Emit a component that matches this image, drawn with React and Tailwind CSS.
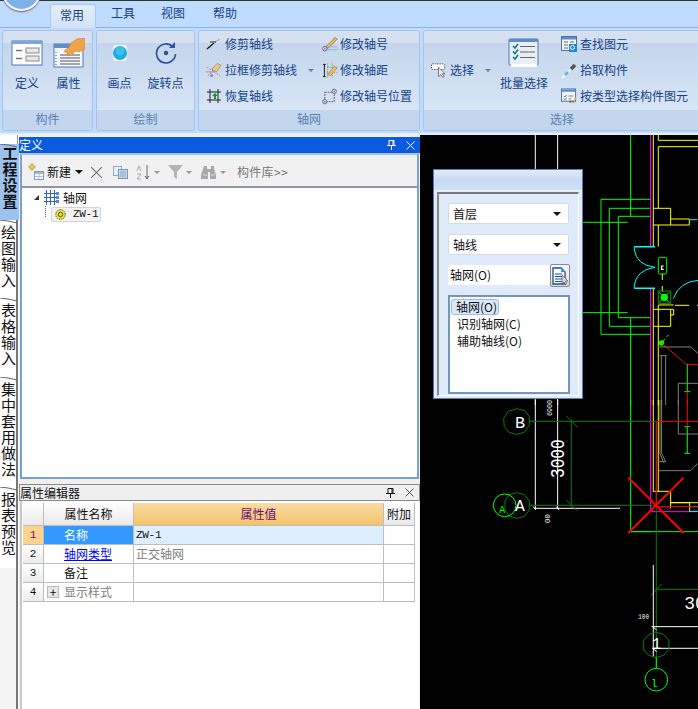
import React from "react";

const FONT = '"Noto Sans CJK SC","Liberation Sans",sans-serif';

function Group({ label, className, children }) {
  return (
    <div className={`flex flex-col rounded-[3px] border border-[#a8c3e4] overflow-hidden shrink-0 ${className}`}>
      <div className="h-[79px] flex bg-gradient-to-b from-[#c5d6ec] to-[#d7e5f5] border-t-[12px] border-t-[#d5e1f1] box-border">
        <div className="flex flex-1 -mt-[12px]">{children}</div>
      </div>
      <div className="h-[20px] bg-[#c2d6ee] text-[12px] leading-[18px] text-center text-[#5a7fb5]">{label}</div>
    </div>
  );
}

function BigBtn({ icon, label, w = "w-[45px]", labelTop = "mt-[6px]" }) {
  return (
    <div className={`flex flex-col items-center pt-[6px] ${w}`}>
      <div className="h-[32px] flex items-center justify-center">{icon}</div>
      <div className={`${labelTop} text-[12px] leading-[16px] text-[#15428b] whitespace-nowrap`}>{label}</div>
    </div>
  );
}

function SmallBtn({ icon, label, caret, gap = "gap-[3px]" }) {
  return (
    <div className={`h-[26px] flex items-center ${gap} whitespace-nowrap`}>
      <span className="w-[16px] h-[16px] flex items-center justify-center shrink-0">{icon}</span>
      <span className="text-[12px] text-[#15428b]">{label}</span>
      {caret && <span className="ml-[8px] w-0 h-0 border-x-[3px] border-x-transparent border-t-[3px] border-t-[#5f7ea9]" />}
    </div>
  );
}

const I = {
  def: (
    <svg width="32" height="26" viewBox="0 0 32 26">
      <rect x="1" y="1" width="30" height="24" fill="#fff" stroke="#4d7cc0" />
      <rect x="1" y="1" width="30" height="3" fill="#7fa5d8" />
      <rect x="15" y="8" width="13" height="5" fill="#e8e8e8" stroke="#8a8a8a" />
      <rect x="15" y="16" width="13" height="5" fill="#e8e8e8" stroke="#8a8a8a" />
      <path d="M5 10.5h6M5 18.5h6" stroke="#777" strokeWidth="1.5" />
    </svg>
  ),
  prop: (
    <svg width="32" height="30" viewBox="0 0 32 30">
      <rect x="1" y="6" width="29" height="23" fill="#f4f7fb" stroke="#4d7cc0" />
      <rect x="1" y="6" width="29" height="4" fill="#5f8dcb" />
      <path d="M7 17h20M7 20h20M7 23h20M7 26h20" stroke="#555" />
      <path d="M3 14v1M3 17v1M3 20v1M3 23v1M3 26v1" stroke="#2a50a8" />
      <path d="M11 13l5-4 2-4 6-4 8-1v11l-6 3-4-1-2 3-3-1-1 3-2-1 1-3-2 1z" fill="#f0a44a" stroke="#c97a24" strokeWidth=".5" />
    </svg>
  ),
  dot: (
    <svg width="18" height="18" viewBox="0 0 18 18">
      <rect x="2" y="1" width="14" height="16" rx="4" fill="#fff" />
      <circle cx="9" cy="9" r="7" fill="#1cabe6" />
      <circle cx="9" cy="7" r="4.5" fill="#3cc0f0" />
    </svg>
  ),
  rot: (
    <svg width="24" height="24" viewBox="0 0 24 24" fill="none">
      <path d="M19 6A9.5 9.5 0 1 0 21.5 13" stroke="#2a50a8" strokeWidth="1.7" />
      <path d="M15 7h6V1z" fill="#2a50a8" />
      <circle cx="12" cy="12" r="2.2" fill="#2a50a8" />
    </svg>
  ),
  trim: (
    <svg width="16" height="12" viewBox="0 0 16 12" fill="none">
      <path d="M1 11L8 5" stroke="#111" strokeWidth="1.3" />
      <path d="M9 4l5-3" stroke="#777" strokeDasharray="2 1" />
      <path d="M4 4h6" stroke="#333" />
    </svg>
  ),
  boxTrim: (
    <svg width="17" height="17" viewBox="0 0 17 17" fill="none">
      <path d="M1 5l14 9M2 14l6-5" stroke="#c66ac2" strokeDasharray="2 1" />
      <path d="M0 10h9" stroke="#999" />
      <path d="M6 7l6-6 4 2-5 7z" fill="#e8c98a" stroke="#9a7a45" strokeWidth=".7" />
      <circle cx="6" cy="14" r="1.5" fill="#8a7ac0" />
    </svg>
  ),
  restore: (
    <svg width="14" height="14" viewBox="0 0 14 14" fill="none">
      <path d="M3 0v14M11 0v14M0 3h14M0 11h14" stroke="#222" />
      <path d="M8 4l3 3H9v3H7V7H5z" fill="#0b9a2e" />
    </svg>
  ),
  editNo: (
    <svg width="17" height="16" viewBox="0 0 17 16" fill="none">
      <path d="M5 10L14 1l2 2-9 9-3 1z" fill="#eebd55" stroke="#6f5b2a" strokeWidth=".7" />
      <circle cx="3" cy="13" r="2.4" fill="#dfe6f6" stroke="#4a66b8" />
      <path d="M6 14h10M6 11h10" stroke="#9ab1d4" />
      <path d="M3 12v2" stroke="#c22" />
    </svg>
  ),
  editDist: (
    <svg width="17" height="15" viewBox="0 0 17 15" fill="none">
      <path d="M1 1h3M1 14h3M2.5 1v13" stroke="#111" />
      <path d="M6 0v15M11 0v15M5 4h12M5 10h12" stroke="#888" strokeDasharray="1 1" />
      <path d="M6 12L13 3l3 2-7 8z" fill="#efc455" stroke="#8f7433" strokeWidth=".6" />
    </svg>
  ),
  editPos: (
    <svg width="17" height="17" viewBox="0 0 17 17" fill="none">
      <rect x="3" y="4" width="10" height="10" stroke="#555" strokeDasharray="2 1" />
      <circle cx="3" cy="14" r="2.3" fill="#dfe6f6" stroke="#4a66b8" />
      <circle cx="13" cy="3" r="2.3" fill="#dfe6f6" stroke="#4a66b8" />
      <path d="M3 13v2M13 2v2" stroke="#c22" />
    </svg>
  ),
  select: (
    <svg width="17" height="16" viewBox="0 0 17 16" fill="none">
      <rect x="0.5" y="1.5" width="14" height="6" rx="1" fill="#fff" stroke="#555" strokeDasharray="1.5 1" />
      <path d="M8 5v10l2.5-2 2 3 1.5-1-2-3h3z" fill="#eef" stroke="#555" strokeWidth=".8" />
    </svg>
  ),
  batch: (
    <svg width="32" height="30" viewBox="0 0 32 30">
      <rect x="1" y="1" width="29" height="26" rx="1" fill="#e9eef5" stroke="#4d7cc0" />
      <rect x="1" y="1" width="29" height="3" fill="#5f8dcb" />
      <rect x="3" y="26" width="26" height="3" fill="#fff" />
      <path d="M12 8.5h15M12 14h15M12 19.5h15" stroke="#666" strokeWidth="1.2" />
      <path d="M5 8l2 2 3-4M5 13.5l2 2 3-4M5 19l2 2 3-4" stroke="#0d7c88" strokeWidth="1.6" fill="none" />
    </svg>
  ),
  find: (
    <svg width="16" height="16" viewBox="0 0 16 16" fill="none">
      <rect x="0.5" y="0.5" width="15" height="14" fill="#f2f5fa" stroke="#4d6fa3" />
      <rect x="1" y="1" width="14" height="2.5" fill="#5f8dcb" />
      <path d="M3 6h4M9 6h4M3 9h4M3 12h4" stroke="#666" />
      <rect x="8" y="8" width="8" height="8" fill="#1e86d8" />
      <circle cx="11.5" cy="11.5" r="2" stroke="#fff" />
    </svg>
  ),
  pick: (
    <svg width="16" height="17" viewBox="0 0 16 17" fill="none">
      <path d="M1 16l3-3" stroke="#f4fbff" strokeWidth="2" />
      <path d="M4 13l3-3" stroke="#5bb4ea" strokeWidth="2.5" />
      <path d="M7 10l3-3" stroke="#e4e8ee" strokeWidth="3" />
      <path d="M10 7l4-4" stroke="#555" strokeWidth="3.5" />
    </svg>
  ),
  byType: (
    <svg width="17" height="16" viewBox="0 0 17 16" fill="none">
      <rect x="0.5" y="0.5" width="15" height="13" fill="#f2f5fa" stroke="#4d6fa3" />
      <rect x="1" y="1" width="14" height="2.5" fill="#5f8dcb" />
      <path d="M3 8l1 1 2-2M3 11l1 1 2-2" stroke="#3a6aa8" />
      <path d="M8 8h5M8 11h3" stroke="#777" />
      <rect x="9" y="13" width="2" height="2" fill="#c33" />
      <rect x="12" y="13" width="2" height="2" fill="#3a3" />
      <rect x="14" y="10" width="2" height="2" fill="#db3" />
    </svg>
  ),
  newB: (
    <svg width="17" height="18" viewBox="0 0 17 18" fill="none">
      <path d="M3 1h2v2h2v2H5v2H3V5H1V3h2z" fill="#f5d36a" stroke="#b8963a" strokeWidth=".7" />
      <rect x="6.5" y="8.5" width="9" height="8" fill="#fff" stroke="#7d9ac2" />
      <rect x="7" y="9" width="8" height="2" fill="#9cb9de" />
      <path d="M11 11v5M7 13.5h8" stroke="#aebfd6" />
    </svg>
  ),
  x: (
    <svg width="11" height="11" viewBox="0 0 11 11" fill="none">
      <path d="M0 0l11 11M11 0L0 11" stroke="#777" strokeWidth="1.2" />
    </svg>
  ),
  copy: (
    <svg width="15" height="13" viewBox="0 0 15 13" fill="none">
      <rect x="0.5" y="0.5" width="8" height="9" fill="#e7eef8" stroke="#8fa9cc" />
      <rect x="5.5" y="3.5" width="9" height="9" fill="#c6d7ee" stroke="#7d97bb" />
      <path d="M7 6h6M7 8h6M7 10h6" stroke="#8fa6c6" />
    </svg>
  ),
  sort: (
    <svg width="14" height="15" viewBox="0 0 14 15" fill="none">
      <path d="M1 6l2-5 2 5M1 9h4l-4 5h4" stroke="#aaa" />
      <path d="M11 0v13" stroke="#666" />
      <path d="M9 11l2 3 2-3" stroke="#666" />
    </svg>
  ),
  filter: (
    <svg width="15" height="14" viewBox="0 0 15 14">
      <path d="M0 0h15L9 7v7l-3-2V7z" fill="#b4b4b4" />
    </svg>
  ),
  binoc: (
    <svg width="16" height="13" viewBox="0 0 16 13">
      <path d="M3 0h3v3h4V0h3v3l2 6v4H9V6H7v7H0V9l2-6z" fill="#a9a9a9" />
      <path d="M2 9h4M10 9h4" stroke="#dadada" />
    </svg>
  ),
  axis: (
    <svg width="15" height="15" viewBox="0 0 15 15" fill="none">
      <path d="M0 3.5h13M0 7.5h13M0 11.5h13M2.5 0v15M6.5 0v15M10.5 0v15" stroke="#2f62bd" />
      <path d="M12 2h3v3h-3zM12 6h3v3h-3zM12 10h3v3h-3z" fill="#5c86cf" />
    </svg>
  ),
  gear: (
    <svg width="11" height="11" viewBox="0 0 11 11">
      <circle cx="5.5" cy="5.5" r="4.8" fill="#f3e321" stroke="#333" strokeDasharray="1 1" />
      <circle cx="5.5" cy="5.5" r="2.2" fill="#f3e321" stroke="#3a4e82" />
    </svg>
  ),
  pin: (
    <svg width="9" height="10" viewBox="0 0 9 10" fill="none">
      <path d="M2 .5h5v5H2zM6 1v4M0 5.5h9M4.5 6v4" stroke="currentColor" />
    </svg>
  ),
  close: (
    <svg width="9" height="9" viewBox="0 0 9 9" fill="none">
      <path d="M.5.5l8 8M8.5.5l-8 8" stroke="currentColor" />
    </svg>
  ),
  caret: <span className="w-0 h-0 border-x-[4px] border-x-transparent border-t-[4px] border-t-[#111]" />,
  smallCaret: <span className="w-0 h-0 border-x-[3px] border-x-transparent border-t-[3px] border-t-[#999]" />,
  docCursor: (
    <svg width="16" height="18" viewBox="0 0 16 18" fill="none">
      <path d="M1 1h8l4 4v12H1z" fill="#fff" stroke="#1a4fa0" strokeWidth="1.3" />
      <path d="M3 7h7M3 9.5h7M3 12h7M3 14.5h7" stroke="#1a4fa0" strokeWidth="1.2" />
      <path d="M9 1v4h4z" fill="#3aa0e8" />
      <path d="M10 8v9l2-2 1.5 2.5 1.3-.7-1.3-2.5 2.5-.3z" fill="#d9d9d9" stroke="#555" strokeWidth=".7" />
    </svg>
  ),
};

function Ribbon() {
  return (
    <div className="h-[135px] shrink-0 bg-[#bfdbff] relative overflow-hidden">
      <div className="absolute left-0 right-0 top-0 h-[1px] bg-[#2a3a2a]" />
      <div className="absolute left-[2px] -top-[28px] w-[39px] h-[39px] rounded-full bg-[#7fb0e8] border-[2px] border-[#f2f6fb] shadow-[0_1px_2px_#667]" />
      <div className="h-[27px] flex items-end pl-[50px] relative">
        <div className="w-[46px] h-[24px] rounded-t-[3px] border border-b-0 border-[#a9c9ee] bg-gradient-to-b from-[#e4eefb] to-[#d2e2f6] text-[12px] leading-[19px] text-center text-[#15428b] -mb-[1px] relative z-10 pr-[2px]">常用</div>
        <div className="text-[12px] leading-[24px] text-[#15428b] ml-[15px] mb-[2px]">工具</div>
        <div className="text-[12px] leading-[24px] text-[#15428b] ml-[26px] mb-[2px]">视图</div>
        <div className="text-[12px] leading-[24px] text-[#15428b] ml-[28px] mb-[2px]">帮助</div>
      </div>
      <div className="border-t border-[#8db3e2] pt-[2px] pl-[2px] flex gap-[3px] bg-[#bfdbff]">
        <Group label="构件" className="w-[91px]">
          <BigBtn icon={I.def} label="定义" w="w-[48px]" />
          <BigBtn icon={I.prop} label="属性" w="w-[35px]" />
        </Group>
        <Group label="绘制" className="w-[99px]">
          <BigBtn icon={I.dot} label="画点" w="w-[45px]" />
          <BigBtn icon={I.rot} label="旋转点" w="w-[47px]" />
        </Group>
        <Group label="轴网" className="w-[222px]">
          <div className="flex pl-[7px]">
            <div className="w-[116px]">
              <SmallBtn icon={I.trim} label="修剪轴线" />
              <SmallBtn icon={I.boxTrim} label="拉框修剪轴线" caret />
              <SmallBtn icon={I.restore} label="恢复轴线" />
            </div>
            <div>
              <SmallBtn icon={I.editNo} label="修改轴号" gap="gap-[2px]" />
              <SmallBtn icon={I.editDist} label="修改轴距" gap="gap-[2px]" />
              <SmallBtn icon={I.editPos} label="修改轴号位置" gap="gap-[2px]" />
            </div>
          </div>
        </Group>
        <Group label="选择" className="w-[278px] rounded-r-none">
          <div className="flex pl-[7px]">
            <div className="w-[61px] pt-[26px]">
              <SmallBtn icon={I.select} label="选择" gap="gap-[3px]" caret />
            </div>
            <BigBtn icon={I.batch} label="批量选择" w="w-[64px]" />
            <div className="ml-[5px]">
              <SmallBtn icon={I.find} label="查找图元" />
              <SmallBtn icon={I.pick} label="拾取构件" />
              <SmallBtn icon={I.byType} label="按类型选择构件图元" />
            </div>
          </div>
        </Group>
      </div>
      <div className="absolute left-0 right-0 bottom-0 h-[2px] bg-[#e8eef6]" />
    </div>
  );
}

function RailTab({ text, h, active }) {
  return (
    <div
      className={`relative flex justify-center shrink-0 ${active ? "bg-[#9cc3f0] w-[19px] font-bold text-[#111] pt-[2px]" : "w-[18px] border-r-2 border-r-[#777] bg-white text-[#111] pt-[5px]"}`}
      style={{ height: h }}
    >
      <svg className="absolute left-0 top-0" width="18" height="4" viewBox="0 0 18 4">
        <path d="M0 0L8 1L17 3" stroke="#666" fill="none" />
      </svg>
      <span className="[writing-mode:vertical-rl] text-[15px] leading-[16px] tracking-[1px]">{text}</span>
    </div>
  );
}

function Rail() {
  return (
    <div className="w-[19px] shrink-0 flex flex-col bg-white">
      <div className="h-[9px] shrink-0 bg-white border-r border-r-[#999] w-[18px]" />
      <RailTab text="工程设置" h={76} active />
      <RailTab text="绘图输入" h={78} />
      <RailTab text="表格输入" h={79} />
      <RailTab text="集中套用做法" h={110} />
      <RailTab text="报表预览" h={81} />
      <div className="flex-1 w-[18px] border-r-2 border-r-[#777] bg-[#f3f3f3]" />
    </div>
  );
}

function ToolBar() {
  return (
    <div className="h-[33px] bg-[#f1f1f1] border-b-2 border-b-[#8e97a3] flex items-center pl-[6px] pt-[3px] shrink-0 text-[12px]">
      {I.newB}
      <span className="ml-[2px] text-[#111]">新建</span>
      <span className="ml-[4px] flex">{I.caret}</span>
      <span className="ml-[8px] flex">{I.x}</span>
      <span className="ml-[11px] flex">{I.copy}</span>
      <span className="ml-[8px] flex">{I.sort}</span>
      <span className="ml-[4px] flex">{I.smallCaret}</span>
      <span className="ml-[8px] flex">{I.filter}</span>
      <span className="ml-[3px] flex">{I.smallCaret}</span>
      <span className="ml-[9px] flex">{I.binoc}</span>
      <span className="ml-[3px] flex">{I.smallCaret}</span>
      <span className="ml-[11px] text-[#777] tracking-[0.3px]">构件库&gt;&gt;</span>
    </div>
  );
}

function DefPanel() {
  return (
    <div className="h-[342px] flex flex-col bg-[#f0f0f0] shrink-0">
      <div className="h-[16px] bg-[#0a5ae0] flex items-center text-white text-[12px] leading-[16px] shrink-0">
        <span className="flex-1">定义</span>
        <span className="flex mr-[10px]">{I.pin}</span>
        <span className="flex mr-[5px]">{I.close}</span>
      </div>
      <div className="flex-1 flex flex-col border-x-2 border-x-[#7ba0d0] border-t-2 border-t-[#a6c4ea] border-b-2 border-b-[#7ba0d0] mx-[1px] min-h-0">
        <ToolBar />
        <div className="flex-1 bg-white pl-[12px] text-[12px] text-[#111]">
          <div className="flex items-center h-[19px]">
            <span className="w-0 h-0 border-l-[5px] border-l-transparent border-b-[5px] border-b-[#333]" />
            <span className="ml-[5px] flex">{I.axis}</span>
            <span className="ml-[4px]">轴网</span>
          </div>
          <div className="flex items-center pl-[9px] relative">
            <span className="absolute left-[11px] -top-[1px] h-[11px] border-l border-dotted border-l-[#666]" />
            <div className="ml-[8px] h-[15px] w-[50px] rounded-[2px] border border-[#d4d4d4] bg-[#f3f3f3] flex items-center pl-[3px]">
              {I.gear}
              <span className="ml-[7px] text-[11px] tracking-[-0.3px] font-['Liberation_Mono']">ZW-1</span>
            </div>
          </div>
        </div>
      </div>
    </div>
  );
}

function HeadCell({ children, className = "" }) {
  return (
    <div className={`bg-gradient-to-b from-white to-[#e9e9e9] border-r border-r-[#bdbdbd] text-center leading-[21px] text-[12px] text-[#111] ${className}`}>
      {children}
    </div>
  );
}

function Row({ n, first, name, value, nameClass = "", valueClass = "" }) {
  return (
    <>
      <div className={`border-r border-b border-[#bdbdbd] text-center text-[11px] leading-[18px] font-['Liberation_Mono'] ${first ? "bg-[#fbd38d] text-[#7a0a6a]" : "bg-gradient-to-b from-white to-[#ececec] text-[#111]"}`}>{n}</div>
      <div className={`border-r border-b border-[#bdbdbd] text-[12px] leading-[18px] pl-[20px] flex items-center ${nameClass}`}>{name}</div>
      <div className={`border-r border-b border-[#bdbdbd] text-[12px] leading-[18px] pl-[2px] flex items-center ${valueClass}`}>{value}</div>
      <div className="border-r border-b border-[#bdbdbd]" />
    </>
  );
}

function PropPanel() {
  return (
    <div className="flex-1 flex flex-col bg-[#f0f0f0] min-h-0">
      <div className="h-[5px]" />
      <div className="h-[15px] bg-[#efefef] border border-[#8a8a8a] flex items-center text-[12px] text-[#111] shrink-0 box-content">
        <span className="flex-1">属性编辑器</span>
        <span className="flex mr-[10px]">{I.pin}</span>
        <span className="flex mr-[5px] text-[#555]">{I.close}</span>
      </div>
      <div className="flex-1 bg-white mx-[1px] border-l-2 border-l-[#c8c8c8] pt-[2px]">
        <div className="grid grid-cols-[21px_90px_250px_31px] grid-rows-[23px_19px_19px_19px_19px] w-[392px] ml-[1px]">
          <HeadCell className="border-b border-b-[#bdbdbd]" />
          <HeadCell className="border-b border-b-[#bdbdbd]">属性名称</HeadCell>
          <div className="bg-gradient-to-b from-[#fbdca2] to-[#f2c36b] border-r border-r-[#bdbdbd] border-b border-b-[#bdbdbd] text-center text-[12px] leading-[21px] text-[#6a0a78]">属性值</div>
          <HeadCell className="border-b border-b-[#bdbdbd]">附加</HeadCell>
          <Row n="1" first name="名称" nameClass="bg-[#3399ff] text-white" value={<span className="text-[11px] tracking-[-0.3px] font-['Liberation_Mono'] text-[#111]">ZW-1</span>} valueClass="bg-[#ddeeff]" />
          <Row n="2" name={<span className="underline text-[#0000ff]">轴网类型</span>} value="正交轴网" valueClass="text-[#808080]" />
          <Row n="3" name="备注" nameClass="text-[#111]" value="" />
          <Row n="4" name={<>
            <span className="-ml-[17px] mr-[5px] w-[12px] h-[12px] border border-[#bbb] bg-[#e8e8e8] flex items-center justify-center text-[12px] leading-none text-[#111]">+</span>
            <span className="text-[#808080]">显示样式</span>
          </>} value="" />
        </div>
      </div>
    </div>
  );
}

function Combo({ label }) {
  return (
    <div className="h-[21px] rounded-[2px] bg-white border border-[#d5dbe6] flex items-center pl-[4px] pr-[7px] justify-between text-[12px] text-[#111]">
      <span>{label}</span>
      {I.caret}
    </div>
  );
}

function Floating() {
  return (
    <div className="absolute left-[13px] top-[34px] w-[150px] h-[230px] bg-[#dfebfb] border border-[#5b7fad] flex flex-col z-10">
      <div className="h-[21px] bg-gradient-to-b from-[#e1ebf8] via-[#c7dbf5] to-[#cde0f8] shrink-0 border-b border-b-[#eef5ff]" />
      <div className="flex-1 mx-[3px] mb-[2px] mt-[1px] border-t-2 border-l-2 border-t-[#777] border-l-[#888] border-r border-b border-r-white border-b-white px-[9px] pt-[9px]">
        <Combo label="首层" />
        <div className="mt-[10px]"><Combo label="轴线" /></div>
        <div className="mt-[10px] flex items-start -mr-[1px]">
          <div className="flex-1 h-[20px] bg-white text-[12px] leading-[20px] pl-[2px] text-[#111]">轴网(O)</div>
          <div className="w-[20px] h-[23px] -mt-[1px] rounded-[2px] border border-[#8a8a8a] bg-gradient-to-b from-[#f7f7f7] to-[#dcdcdc] flex items-center justify-center">{I.docCursor}</div>
        </div>
        <div className="mt-[8px] w-[122px] h-[99px] border-2 border-[#7794bd] bg-white pl-[1px] pt-[2px] text-[12px] text-[#111]">
          <div className="w-[48px] h-[16px] rounded-[3px] border border-[#9bbbe3] bg-[#dbe8f9] leading-[14px] pl-[4px] whitespace-nowrap">轴网(O)</div>
          <div className="h-[17px] leading-[17px] pl-[6px] whitespace-nowrap">识别轴网(C)</div>
          <div className="h-[17px] leading-[17px] pl-[6px] whitespace-nowrap">辅助轴线(O)</div>
        </div>
      </div>
    </div>
  );
}

const L = ({ d, c, w = 1, dash }) => (
  <path d={d} stroke={c} strokeWidth={w} fill="none" vectorEffect="non-scaling-stroke" strokeDasharray={dash} />
);

const G = "#00ff00";
const DG = "#0a7d0a";
const Y = "#ffff00";
const C = "#00ffff";
const M = "#ff00ff";
const W = "#ffffff";
const R = "#ff0000";
const GR = "#808080";

function Cad() {
  return (
    <div className="flex-1 relative bg-black min-w-0">
      <svg className="absolute inset-0" width="278" height="574" viewBox="420 135 278 574" fill="none" style={{ fontFamily: '"Liberation Mono",monospace' }}>
        <g transform="translate(425 135) scale(0.3333)">
          <L d="M331 0V810M398 0V810" c={W} />
          <L d="M617 0V245M617 548V810" c={G} />
          <L d="M473 262H608M473 533H608" c={G} />
          <L d="M678 193H528V598H678M678 220H553V574H678M678 244H580V548H678" c={G} />
          <L d="M677 0V335M677 460V810" c={M} />
          <L d="M685 0V335M685 460V810M700 0V16H819M700 220V35H819M700 270V335M700 510V810" c={Y} />
          <L d="M685 220H737V270H685M737 252H793V270H737M685 523H737V574H685M737 523H746V540H737" c={Y} />
          <L d="M700 510H746" c={Y} />
          <L d="M793 254H819" c={C} dash="8 6" />
          <L d="M628 335H690M628 460H690" c={C} w={1.5} />
          <L d="M628 335V345Q635 390 690 397Q635 405 628 450V460" c={C} />
          <L d="M745 490Q765 440 819 436" c={C} />
          <rect x="700" y="367" width="25" height="50" rx="4" stroke={G} vectorEffect="non-scaling-stroke" />
          <L d="M716 393H710V403H716" c={W} w={1.2} />
          <L d="M712 417V470" c={Y} dash="6 6" />
          <L d="M750 511H819" c={Y} dash="14 8" />
          <rect x="700" y="468" width="37" height="37" stroke="#0a9a0a" vectorEffect="non-scaling-stroke" />
          <circle cx="718" cy="487" r="11" fill={G} />
          <L d="M703 472L733 502M733 472L703 502" c={G} />
          <circle cx="710" cy="624" r="8" fill={G} />
          <L d="M710 624L730 600" c={G} dash="5 3" />
          <L d="M710 624L783 688H819" c={R} />
          <L d="M787 688V770M778 770H796" c={G} />
          <L d="M700 636H797L819 655" c={GR} />
          <L d="M705 662H725M709 662V810M722 662V810" c={GR} />
          <L d="M760 810V745H819" c={GR} />
          <L d="M787 770V810" c={R} />
        </g>
        <g transform="translate(425 400) scale(0.3333)">
          <L d="M331 0V325M398 0V325" c={W} />
          <L d="M327 325H585" c={W} />
          <L d="M325 320L333 330M394 320L402 330" c={W} />
          <L d="M617 0V395H677" c={G} />
          <L d="M617 395H819" c={G} />
          <L d="M677 0V335H819" c={M} />
          <L d="M685 0V275M700 0V275M685 274H737V308H794V335M737 308V325M737 308H819" c={Y} />
          <L d="M794 320H819M794 334H819" c={C} />
          <L d="M710 0V160L722 185H700M705 0V160L716 188" c={GR} />
          <L d="M702 212H797L819 190M760 0V102H819" c={GR} />
          <L d="M787 80V160M778 80H796M778 160H796" c={G} />
          <L d="M787 0V80" c={R} />
          <L d="M315 64H694V805" c={DG} />
          <L d="M694 64H819" c={R} />
          <L d="M694 64V320M694 320H819" c={R} />
          <L d="M439 60V320" c={DG} />
          <L d="M424 48L458 82M424 300L458 334" c={DG} />
          <L d="M315 316H694" c={DG} />
          <L d="M694 568H819M678 586L710 552" c={DG} />
          <L d="M610 233L776 399M776 233L610 399" c={R} w={2} />
          <L d="M685 495V770" c={W} />
          <L d="M680 680H819M682 745H819" c={W} />
          <L d="M683 680L695 690M683 745L695 755" c={W} />
          <L d="M694 770V805" c={G} />
          <polygon points="275,26 300,32 313,50 313,76 298,97 275,103 252,97 238,80 236,55 250,34" stroke={DG} vectorEffect="non-scaling-stroke" />
          <polygon points="276,278 298,284 313,303 313,330 298,349 276,355 253,349 240,330 240,303 253,284" stroke={DG} vectorEffect="non-scaling-stroke" />
          <polygon points="693,696 716,704 732,722 732,748 716,766 693,773 671,766 655,748 655,722 671,704" stroke={DG} vectorEffect="non-scaling-stroke" />
          <circle cx="239" cy="316" r="34" stroke={G} vectorEffect="non-scaling-stroke" />
          <circle cx="694" cy="839" r="34" stroke={G} vectorEffect="non-scaling-stroke" />
          <text x="270" y="83" fill={W} fontSize="51">B</text>
          <text x="270" y="333" fill={W} fontSize="49">A</text>
          <text x="223" y="338" fill={G} fontSize="30">A</text>
          <text x="677" y="860" fill={G} fontSize="34">l</text>
          <text x="680" y="748" fill={W} fontSize="48">1</text>
          <text x="778" y="628" fill={W} fontSize="54">30</text>
          <text x="640" y="658" fill={W} fontSize="20" textLength="32" lengthAdjust="spacingAndGlyphs">100</text>
          <text transform="translate(375 370) rotate(-90)" fill={W} fontSize="22" textLength="28" lengthAdjust="spacingAndGlyphs">00</text>
          <text transform="translate(381 48) rotate(-90)" fill={W} fontSize="22" textLength="48" lengthAdjust="spacingAndGlyphs">6900</text>
          <text transform="translate(416 234) rotate(-90)" fill={W} fontSize="60" textLength="116" lengthAdjust="spacingAndGlyphs">3000</text>
        </g>
      </svg>
      <Floating />
    </div>
  );
}

export default function App() {
  return (
    <div className="w-[698px] h-[709px] overflow-hidden flex flex-col bg-white" style={{ fontFamily: FONT }}>
      <Ribbon />
      <div className="flex-1 flex min-h-0">
        <Rail />
        <div className="w-[401px] shrink-0 flex flex-col pt-[2px] bg-[#f0f0f0]">
          <DefPanel />
          <PropPanel />
        </div>
        <Cad />
      </div>
    </div>
  );
}
